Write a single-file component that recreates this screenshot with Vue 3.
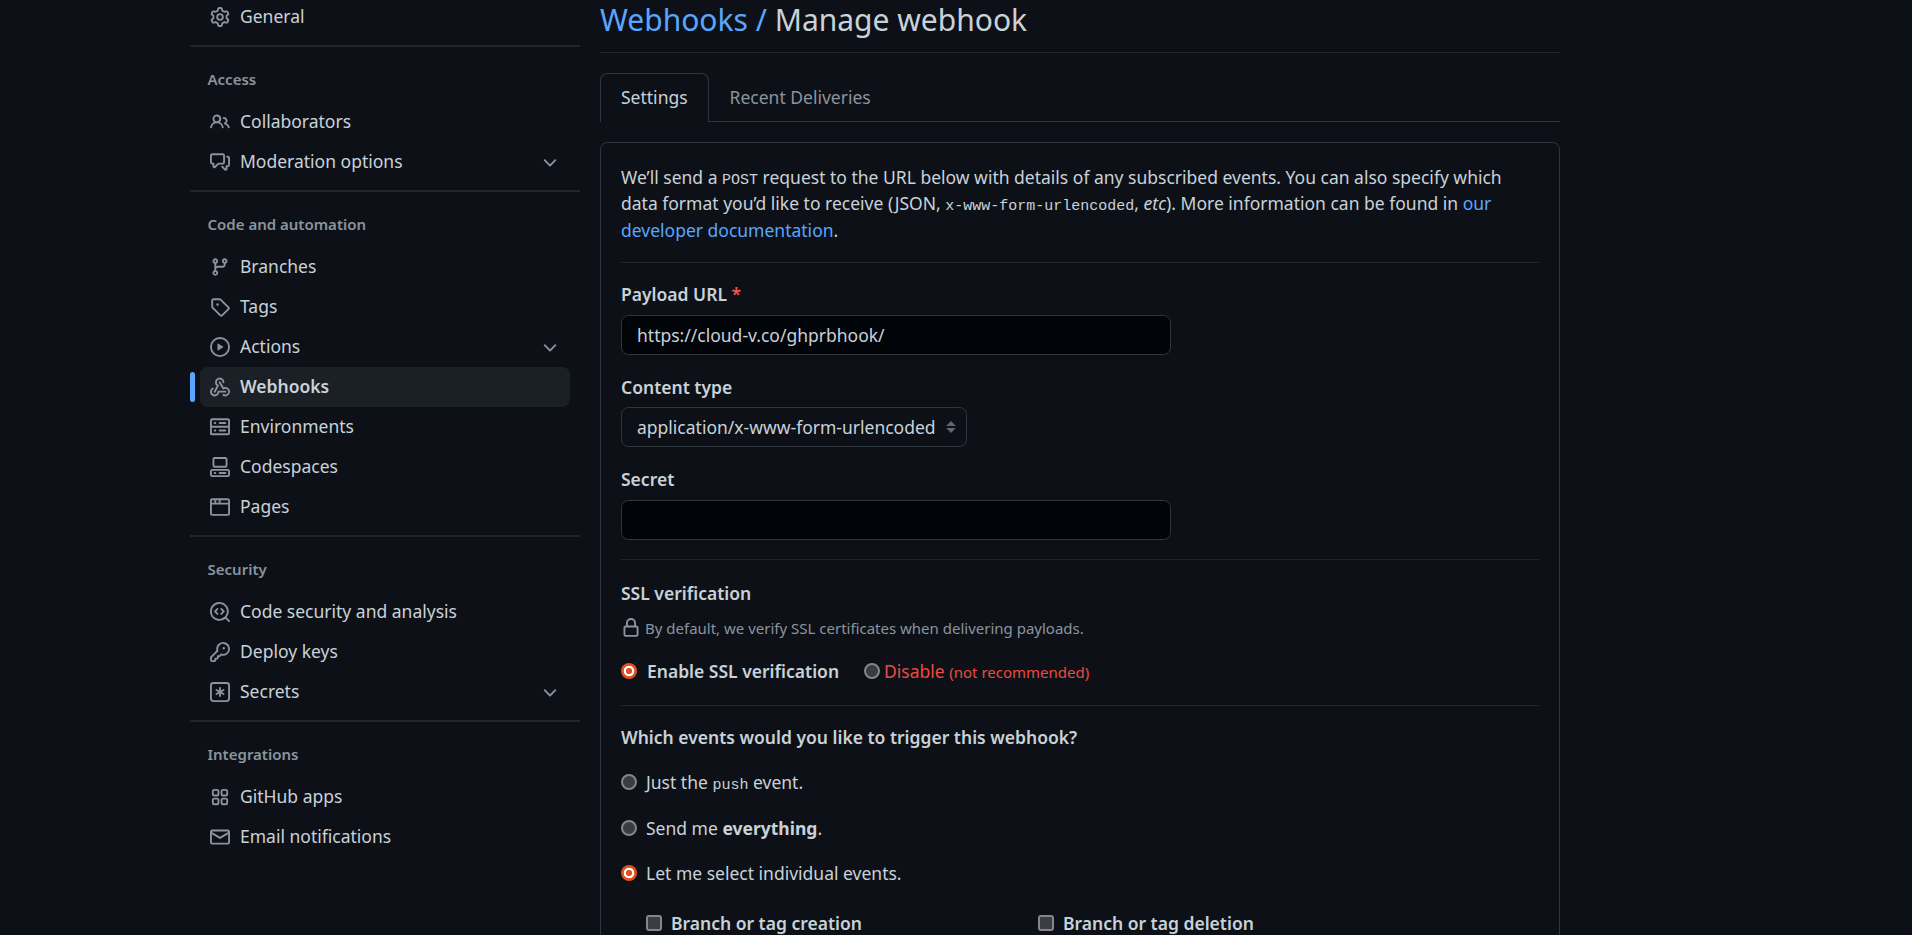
<script setup>
const icons = {
  gear: ['M8 0a8.2 8.2 0 0 1 .701.031C9.444.095 9.99.645 10.16 1.29l.288 1.107c.018.066.079.158.212.224.231.114.454.243.668.386.123.082.233.09.299.071l1.103-.303c.644-.176 1.392.021 1.82.63.27.385.506.792.704 1.218.315.675.111 1.422-.364 1.891l-.814.806c-.049.048-.098.147-.088.294.016.257.016.515 0 .772-.01.147.038.246.088.294l.814.806c.475.469.679 1.216.364 1.891a7.977 7.977 0 0 1-.704 1.217c-.428.61-1.176.807-1.82.63l-1.102-.302c-.067-.019-.177-.011-.3.071a5.909 5.909 0 0 1-.668.386c-.133.066-.194.158-.211.224l-.29 1.106c-.168.646-.715 1.196-1.458 1.26a8.006 8.006 0 0 1-1.402 0c-.743-.064-1.289-.614-1.458-1.26l-.289-1.106c-.018-.066-.079-.158-.212-.224a5.738 5.738 0 0 1-.668-.386c-.123-.082-.233-.09-.299-.071l-1.103.303c-.644.176-1.392-.021-1.82-.63a8.12 8.12 0 0 1-.704-1.218c-.315-.675-.111-1.422.363-1.891l.815-.806c.05-.048.098-.147.088-.294a6.214 6.214 0 0 1 0-.772c.01-.147-.038-.246-.088-.294l-.815-.806C.635 6.045.431 5.298.746 4.623a7.92 7.92 0 0 1 .704-1.217c.428-.61 1.176-.807 1.82-.63l1.102.302c.067.019.177.011.3-.071.214-.143.437-.272.668-.386.133-.066.194-.158.211-.224l.29-1.106C6.009.645 6.556.095 7.299.03 7.53.01 7.764 0 8 0Zm-.571 1.525c-.036.003-.108.036-.137.146l-.289 1.105c-.147.561-.549.967-.998 1.189-.173.086-.34.183-.5.29-.417.278-.97.423-1.529.27l-1.103-.303c-.109-.03-.175.016-.195.045-.22.312-.412.644-.573.99-.014.031-.021.11.059.19l.815.806c.411.406.562.957.53 1.456a4.709 4.709 0 0 0 0 .582c.032.499-.119 1.05-.53 1.456l-.815.806c-.081.08-.073.159-.059.19.162.346.353.677.573.989.02.03.085.076.195.046l1.102-.303c.56-.153 1.113-.008 1.53.27.161.107.328.204.501.29.447.222.85.629.997 1.189l.289 1.105c.029.109.101.143.137.146a6.6 6.6 0 0 0 1.142 0c.036-.003.108-.036.137-.146l.289-1.105c.147-.561.549-.967.998-1.189.173-.086.34-.183.5-.29.417-.278.97-.423 1.529-.27l1.103.303c.109.029.175-.016.195-.045.22-.313.411-.644.573-.99.014-.031.021-.11-.059-.19l-.815-.806c-.411-.406-.562-.957-.53-1.456a4.709 4.709 0 0 0 0-.582c-.032-.499.119-1.05.53-1.456l.815-.806c.081-.08.073-.159.059-.19a6.464 6.464 0 0 0-.573-.989c-.02-.03-.085-.076-.195-.046l-1.102.303c-.56.153-1.113.008-1.53-.27a4.44 4.44 0 0 0-.501-.29c-.447-.222-.85-.629-.997-1.189l-.289-1.105c-.029-.11-.101-.143-.137-.146a6.6 6.6 0 0 0-1.142 0ZM11 8a3 3 0 1 1-6 0 3 3 0 0 1 6 0ZM9.5 8a1.5 1.5 0 1 0-3.001.001A1.5 1.5 0 0 0 9.5 8Z'],
  people: ['M2 5.5a3.5 3.5 0 1 1 5.898 2.549 5.508 5.508 0 0 1 3.034 4.084.75.75 0 1 1-1.482.235 4 4 0 0 0-7.9 0 .75.75 0 0 1-1.482-.236A5.507 5.507 0 0 1 3.102 8.05 3.493 3.493 0 0 1 2 5.5ZM11 4a3.001 3.001 0 0 1 2.22 5.018 5.01 5.01 0 0 1 2.56 3.012.749.749 0 0 1-.885.954.752.752 0 0 1-.549-.514 3.507 3.507 0 0 0-2.522-2.372.75.75 0 0 1-.574-.73v-.352a.75.75 0 0 1 .416-.672A1.5 1.5 0 0 0 11 5.5.75.75 0 0 1 11 4Zm-5.5-.5a2 2 0 1 0-.001 3.999A2 2 0 0 0 5.5 3.5Z'],
  discussion: ['M1.75 1h8.5c.966 0 1.75.784 1.75 1.75v5.5A1.75 1.75 0 0 1 10.25 10H7.061l-2.574 2.573A1.458 1.458 0 0 1 2 11.543V10h-.25A1.75 1.75 0 0 1 0 8.25v-5.5C0 1.784.784 1 1.75 1ZM1.5 2.75v5.5c0 .138.112.25.25.25h1a.75.75 0 0 1 .75.75v2.19l2.72-2.72a.749.749 0 0 1 .53-.22h3.5a.25.25 0 0 0 .25-.25v-5.5a.25.25 0 0 0-.25-.25h-8.5a.25.25 0 0 0-.25.25Zm13 2a.25.25 0 0 0-.25-.25h-.5a.75.75 0 0 1 0-1.5h.5c.966 0 1.75.784 1.75 1.75v5.5A1.75 1.75 0 0 1 14.25 12H14v1.543a1.458 1.458 0 0 1-2.487 1.03L9.22 12.28a.749.749 0 0 1 .326-1.275.749.749 0 0 1 .734.215l2.22 2.22v-2.19a.75.75 0 0 1 .75-.75h1a.25.25 0 0 0 .25-.25Z'],
  branch: ['M9.5 3.25a2.25 2.25 0 1 1 3 2.122V6A2.5 2.5 0 0 1 10 8.5H6a1 1 0 0 0-1 1v1.128a2.251 2.251 0 1 1-1.5 0V5.372a2.25 2.25 0 1 1 1.5 0v1.836A2.493 2.493 0 0 1 6 7h4a1 1 0 0 0 1-1v-.628A2.25 2.25 0 0 1 9.5 3.25Zm-6 0a.75.75 0 1 0 1.5 0 .75.75 0 0 0-1.5 0Zm8.25-.75a.75.75 0 1 0 0 1.5.75.75 0 0 0 0-1.5ZM4.25 12a.75.75 0 1 0 0 1.5.75.75 0 0 0 0-1.5Z'],
  tag: ['M1 7.775V2.75C1 1.784 1.784 1 2.75 1h5.025c.464 0 .91.184 1.238.513l6.25 6.25a1.75 1.75 0 0 1 0 2.474l-5.026 5.026a1.75 1.75 0 0 1-2.474 0l-6.25-6.25A1.752 1.752 0 0 1 1 7.775Zm1.5 0c0 .066.026.13.073.177l6.25 6.25a.25.25 0 0 0 .354 0l5.025-5.025a.25.25 0 0 0 0-.354l-6.25-6.25a.25.25 0 0 0-.177-.073H2.75a.25.25 0 0 0-.25.25ZM6 5a1 1 0 1 1 0 2 1 1 0 0 1 0-2Z'],
  play: ['M8 0a8 8 0 1 1 0 16A8 8 0 0 1 8 0ZM1.5 8a6.5 6.5 0 1 0 13 0 6.5 6.5 0 0 0-13 0Zm4.879-2.773 4.264 2.559a.25.25 0 0 1 0 .428l-4.264 2.559A.25.25 0 0 1 6 10.559V5.442a.25.25 0 0 1 .379-.215Z'],
  webhook: ['M5.5 4.25a2.25 2.25 0 0 1 4.5 0 .75.75 0 0 0 1.5 0 3.75 3.75 0 1 0-6.14 2.889l-2.272 4.258a.75.75 0 0 0 1.324.706L7 7.25a.75.75 0 0 0-.309-1.015A2.25 2.25 0 0 1 5.5 4.25Z', 'M7.364 3.607a.75.75 0 0 1 1.03.257l2.608 4.349a3.75 3.75 0 1 1-.628 6.785.75.75 0 0 1 .752-1.299 2.25 2.25 0 1 0-.033-3.88.75.75 0 0 1-1.03-.256L7.107 4.636a.75.75 0 0 1 .257-1.03Z', 'M2.9 8.776A.75.75 0 0 1 2.625 9.8 2.25 2.25 0 1 0 6 11.75a.75.75 0 0 1 .75-.751h5.5a.75.75 0 0 1 0 1.5H7.425a3.751 3.751 0 1 1-5.55-3.998.75.75 0 0 1 1.024.274Z'],
  server: ['M1.75 1h12.5c.966 0 1.75.784 1.75 1.75v4c0 .372-.116.717-.314 1 .198.283.314.628.314 1v4a1.75 1.75 0 0 1-1.75 1.75H1.75A1.75 1.75 0 0 1 0 13.75v-4c0-.372.116-.717.314-1a1.739 1.739 0 0 1-.314-1v-4C0 1.784.784 1 1.75 1ZM1.5 2.75v4c0 .138.112.25.25.25h12.5a.25.25 0 0 0 .25-.25v-4a.25.25 0 0 0-.25-.25H1.75a.25.25 0 0 0-.25.25Zm.25 5.75a.25.25 0 0 0-.25.25v4c0 .138.112.25.25.25h12.5a.25.25 0 0 0 .25-.25v-4a.25.25 0 0 0-.25-.25ZM7 4.75A.75.75 0 0 1 7.75 4h4.5a.75.75 0 0 1 0 1.5h-4.5A.75.75 0 0 1 7 4.75ZM7.75 10h4.5a.75.75 0 0 1 0 1.5h-4.5a.75.75 0 0 1 0-1.5ZM3 4.75A.75.75 0 0 1 3.75 4h.5a.75.75 0 0 1 0 1.5h-.5A.75.75 0 0 1 3 4.75ZM3.75 10h.5a.75.75 0 0 1 0 1.5h-.5a.75.75 0 0 1 0-1.5Z'],
  codespaces: ['M0 11.25c0-.966.784-1.75 1.75-1.75h12.5c.966 0 1.75.784 1.75 1.75v3A1.75 1.75 0 0 1 14.25 16H1.75A1.75 1.75 0 0 1 0 14.25Zm2-9.5C2 .784 2.784 0 3.75 0h8.5C13.216 0 14 .784 14 1.75v5a1.75 1.75 0 0 1-1.75 1.75h-8.5A1.75 1.75 0 0 1 2 6.75Zm1.75-.25a.25.25 0 0 0-.25.25v5c0 .138.112.25.25.25h8.5a.25.25 0 0 0 .25-.25v-5a.25.25 0 0 0-.25-.25Zm-2 9.5a.25.25 0 0 0-.25.25v3c0 .138.112.25.25.25h12.5a.25.25 0 0 0 .25-.25v-3a.25.25 0 0 0-.25-.25Z', 'M7 12.75a.75.75 0 0 1 .75-.75h4.5a.75.75 0 0 1 0 1.5h-4.5a.75.75 0 0 1-.75-.75Zm-4 0a.75.75 0 0 1 .75-.75h.5a.75.75 0 0 1 0 1.5h-.5a.75.75 0 0 1-.75-.75Z'],
  browser: ['M0 2.75C0 1.784.784 1 1.75 1h12.5c.966 0 1.75.784 1.75 1.75v10.5A1.75 1.75 0 0 1 14.25 15H1.75A1.75 1.75 0 0 1 0 13.25ZM14.5 6h-13v7.25c0 .138.112.25.25.25h12.5a.25.25 0 0 0 .25-.25Zm-6-3.5v2h6V2.75a.25.25 0 0 0-.25-.25ZM5 2.5v2h2v-2Zm-3.25 0a.25.25 0 0 0-.25.25V4.5h2v-2Z'],
  codescan: ['M8.47 4.97a.75.75 0 0 0 0 1.06L9.94 7.5 8.47 8.97a.75.75 0 1 0 1.06 1.06l2-2a.75.75 0 0 0 0-1.06l-2-2a.75.75 0 0 0-1.06 0ZM6.53 6.03a.75.75 0 0 0-1.06-1.06l-2 2a.75.75 0 0 0 0 1.06l2 2a.75.75 0 1 0 1.06-1.06L5.06 7.5l1.47-1.47Z', 'M12.246 13.307a7.501 7.501 0 1 1 1.06-1.06l2.474 2.473a.749.749 0 0 1-.326 1.275.749.749 0 0 1-.734-.215ZM1.5 7.5a6.002 6.002 0 0 0 3.608 5.504 6.002 6.002 0 0 0 6.486-1.117.748.748 0 0 1 .292-.293A6 6 0 1 0 1.5 7.5Z'],
  key: ['M10.5 0a5.499 5.499 0 1 1-1.288 10.848l-.932.932a.749.749 0 0 1-.53.22H7v.75a.749.749 0 0 1-.22.53l-.5.5a.749.749 0 0 1-.53.22H5v.75a.749.749 0 0 1-.22.53l-.5.5a.749.749 0 0 1-.53.22h-2A1.75 1.75 0 0 1 0 14.25v-2c0-.199.079-.389.22-.53l4.932-4.932A5.5 5.5 0 0 1 10.5 0Zm-4 5.5c-.001.431.069.86.205 1.269a.75.75 0 0 1-.181.768L1.5 12.56v1.69c0 .138.112.25.25.25h1.69l.06-.06v-1.19a.75.75 0 0 1 .75-.75h1.19l.06-.06v-1.19a.75.75 0 0 1 .75-.75h1.19l1.023-1.025a.75.75 0 0 1 .768-.18A4 4 0 1 0 6.5 5.5ZM11 6a1 1 0 1 1 0-2 1 1 0 0 1 0 2Z'],
  asterisk: ['M0 2.75A2.75 2.75 0 0 1 2.75 0h10.5A2.75 2.75 0 0 1 16 2.75v10.5A2.75 2.75 0 0 1 13.25 16H2.75A2.75 2.75 0 0 1 0 13.25ZM2.75 1.5c-.69 0-1.25.56-1.25 1.25v10.5c0 .69.56 1.25 1.25 1.25h10.5c.69 0 1.25-.56 1.25-1.25V2.75c0-.69-.56-1.25-1.25-1.25Z', 'M8 4a.75.75 0 0 1 .75.75V6.7l1.69-.975a.75.75 0 0 1 .75 1.3L9.5 8l1.69.976a.75.75 0 0 1-.75 1.298L8.75 9.3v1.951a.75.75 0 0 1-1.5 0V9.299l-1.69.976a.75.75 0 0 1-.75-1.3L6.5 8l-1.69-.975a.75.75 0 0 1 .75-1.3l1.69.976V4.75A.75.75 0 0 1 8 4Z'],
  apps: ['M1.5 3.25c0-.966.784-1.75 1.75-1.75h2.5c.966 0 1.75.784 1.75 1.75v2.5A1.75 1.75 0 0 1 5.75 7.5h-2.5A1.75 1.75 0 0 1 1.5 5.75Zm7 0c0-.966.784-1.75 1.75-1.75h2.5c.966 0 1.75.784 1.75 1.75v2.5a1.75 1.75 0 0 1-1.75 1.75h-2.5A1.75 1.75 0 0 1 8.5 5.75Zm-7 7c0-.966.784-1.75 1.75-1.75h2.5c.966 0 1.75.784 1.75 1.75v2.5a1.75 1.75 0 0 1-1.75 1.75h-2.5a1.75 1.75 0 0 1-1.75-1.75Zm7 0c0-.966.784-1.75 1.75-1.75h2.5c.966 0 1.75.784 1.75 1.75v2.5a1.75 1.75 0 0 1-1.75 1.75h-2.5a1.75 1.75 0 0 1-1.75-1.75ZM3.25 3a.25.25 0 0 0-.25.25v2.5c0 .138.112.25.25.25h2.5A.25.25 0 0 0 6 5.75v-2.5A.25.25 0 0 0 5.75 3Zm7 0a.25.25 0 0 0-.25.25v2.5c0 .138.112.25.25.25h2.5a.25.25 0 0 0 .25-.25v-2.5a.25.25 0 0 0-.25-.25Zm-7 7a.25.25 0 0 0-.25.25v2.5c0 .138.112.25.25.25h2.5a.25.25 0 0 0 .25-.25v-2.5a.25.25 0 0 0-.25-.25Zm7 0a.25.25 0 0 0-.25.25v2.5c0 .138.112.25.25.25h2.5a.25.25 0 0 0 .25-.25v-2.5a.25.25 0 0 0-.25-.25Z'],
  mail: ['M1.75 2h12.5c.966 0 1.75.784 1.75 1.75v8.5A1.75 1.75 0 0 1 14.25 14H1.75A1.75 1.75 0 0 1 0 12.25v-8.5C0 2.784.784 2 1.75 2ZM1.5 12.251c0 .138.112.25.25.25h12.5a.25.25 0 0 0 .25-.25V5.809L8.38 9.397a.75.75 0 0 1-.76 0L1.5 5.809v6.442Zm13-8.181v-.32a.25.25 0 0 0-.25-.25H1.75a.25.25 0 0 0-.25.25v.32L8 7.88Z'],
  chevron: ['M12.78 5.22a.749.749 0 0 1 0 1.06l-4.25 4.25a.749.749 0 0 1-1.06 0L3.22 6.28a.749.749 0 1 1 1.06-1.06L8 8.939l3.72-3.719a.749.749 0 0 1 1.06 0Z'],
  lock: ['M4 4a4 4 0 0 1 8 0v2h.25c.966 0 1.75.784 1.75 1.75v5.5A1.75 1.75 0 0 1 12.25 15h-8.5A1.75 1.75 0 0 1 2 13.25v-5.5C2 6.784 2.784 6 3.75 6H4Zm8.25 3.5h-8.5a.25.25 0 0 0-.25.25v5.5c0 .138.112.25.25.25h8.5a.25.25 0 0 0 .25-.25v-5.5a.25.25 0 0 0-.25-.25ZM10.5 6V4a2.5 2.5 0 1 0-5 0v2Z']
}

const groups = [
  { items: [{ label: 'General', icon: 'gear' }] },
  { title: 'Access', items: [
    { label: 'Collaborators', icon: 'people' },
    { label: 'Moderation options', icon: 'discussion', more: true }
  ] },
  { title: 'Code and automation', items: [
    { label: 'Branches', icon: 'branch' },
    { label: 'Tags', icon: 'tag' },
    { label: 'Actions', icon: 'play', more: true },
    { label: 'Webhooks', icon: 'webhook', active: true },
    { label: 'Environments', icon: 'server' },
    { label: 'Codespaces', icon: 'codespaces' },
    { label: 'Pages', icon: 'browser' }
  ] },
  { title: 'Security', items: [
    { label: 'Code security and analysis', icon: 'codescan' },
    { label: 'Deploy keys', icon: 'key' },
    { label: 'Secrets', icon: 'asterisk', more: true }
  ] },
  { title: 'Integrations', items: [
    { label: 'GitHub apps', icon: 'apps' },
    { label: 'Email notifications', icon: 'mail' }
  ] }
]
</script>

<template>
  <div class="page">
    <aside class="sidebar">
      <section v-for="(group, g) in groups" :key="g" class="group">
        <h3 v-if="group.title" class="group-title">{{ group.title }}</h3>
        <a
          v-for="item in group.items"
          :key="item.label"
          class="nav-item"
          :class="{ active: item.active }"
        >
          <svg class="icon" viewBox="0 0 16 16"><path v-for="d in icons[item.icon]" :key="d" :d="d" /></svg>
          <span class="nav-label">{{ item.label }}</span>
          <svg v-if="item.more" class="icon chevron" viewBox="0 0 16 16"><path :d="icons.chevron[0]" /></svg>
        </a>
      </section>
    </aside>

    <main class="main">
      <h2 class="title"><a class="link">Webhooks /</a> Manage webhook</h2>

      <div class="tabs">
        <a class="tab selected">Settings</a>
        <a class="tab">Recent Deliveries</a>
      </div>

      <div class="box">
        <p class="intro">
          We’ll send a <code>POST</code> request to the URL below with details of any subscribed events. You can also specify which data format you’d like to receive (JSON, <code>x-www-form-urlencoded</code>, <em>etc</em>). More information can be found in <a class="link">our developer documentation</a>.
        </p>

        <hr class="rule rule-intro" />

        <div class="field">
          <label class="label">Payload URL <span class="req">*</span></label>
          <input class="input" type="text" value="https://cloud-v.co/ghprbhook/" />
        </div>
        <div class="field">
          <label class="label">Content type</label>
          <div class="select">
            <span>application/x-www-form-urlencoded</span>
            <svg class="updown" viewBox="0 0 10 12"><path d="M5 0 9.8 5H.2Z" /><path d="M5 12 .2 7h9.6Z" /></svg>
          </div>
        </div>
        <div class="field">
          <label class="label">Secret</label>
          <input class="input secret" type="text" />
        </div>

        <hr class="rule rule-form" />

        <h4 class="label ssl-title">SSL verification</h4>
        <p class="hint">
          <svg class="icon lock" viewBox="0 0 16 16"><path :d="icons.lock[0]" /></svg>
          By default, we verify SSL certificates when delivering payloads.
        </p>
        <div class="ssl-options">
          <label class="choice strong"><span class="radio on"></span>Enable SSL verification</label>
          <label class="choice danger"><span class="radio"></span><span>Disable <small>(not recommended)</small></span></label>
        </div>

        <hr class="rule rule-ssl" />

        <h4 class="label events-title">Which events would you like to trigger this webhook?</h4>
        <label class="choice event"><span class="radio"></span><span class="choice-text">Just the <code>push</code> event.</span></label>
        <label class="choice event"><span class="radio"></span><span class="choice-text">Send me <strong>everything</strong>.</span></label>
        <label class="choice event"><span class="radio on"></span><span class="choice-text">Let me select individual events.</span></label>

        <div class="checks">
          <label class="check"><span class="checkbox"></span>Branch or tag creation</label>
          <label class="check"><span class="checkbox"></span>Branch or tag deletion</label>
        </div>
      </div>
    </main>
  </div>
</template>

<style>
html, body { margin: 0; background: #0d1117; overflow: hidden; }
</style>

<style scoped>
.page {
  display: flex;
  gap: 20px;
  height: 935px;
  overflow: hidden;
  padding-left: 190px;
  width: 1370px;
  color: #c9d1d9;
  background: #0d1117;
  font-family: "Noto Sans", sans-serif;
  font-size: 17.5px;
  line-height: 26.25px;
}

.sidebar { width: 390px; flex: none; margin-top: -3px; }
.group { padding-bottom: 8px; border-bottom: 2px solid #21262d; }
.group:last-child { border-bottom: 0; }
.group-title {
  margin: 0;
  padding: 0 0 0 17.5px;
  height: 55px;
  line-height: 65px;
  box-sizing: border-box;
  font-size: 15px;
  font-weight: 600;
  color: #8b949e;
}
.nav-item {
  position: relative;
  display: flex;
  align-items: center;
  height: 40px;
  margin: 0 10px;
  padding: 0 10px;
  border-radius: 7.5px;
  box-sizing: border-box;
}
.nav-item.active { background: #1b2026; font-weight: 600; }
.nav-item.active::before {
  content: "";
  position: absolute;
  left: -10px;
  top: 5px;
  width: 5px;
  height: 30px;
  border-radius: 5px;
  background: #58a6ff;
}
.nav-label { flex: 1; margin-left: 10px; padding-bottom: 1px; }
.icon { width: 20px; height: 20px; flex: none; fill: #8b949e; }
.chevron { fill: #8b949e; margin-top: 2px; }

.main { width: 960px; flex: none; }
.title {
  margin: 0;
  height: 52px;
  border-bottom: 1px solid #21262d;
  font-size: 30px;
  font-weight: 400;
  line-height: 40px;
}
.link { color: #58a6ff; }

.tabs {
  display: flex;
  height: 48px;
  margin-top: 20px;
  border-bottom: 1px solid #30363d;
}
.tab {
  box-sizing: border-box;
  margin-left: 1px;
  padding: 0 20px;
  line-height: 49px;
  color: #8b949e;
}
.tab.selected {
  height: 49px;
  margin-left: 0;
  line-height: 47px;
  color: #c9d1d9;
  background: #0d1117;
  border: 1px solid #30363d;
  border-bottom: 0;
  border-radius: 7.5px 7.5px 0 0;
}

.box {
  margin-top: 20px;
  padding: 21px 20px 20px;
  border: 1px solid #30363d;
  border-radius: 7.5px;
  height: 900px;
  box-sizing: border-box;
}
.intro { margin: 0; }
code {
  font-family: "Liberation Mono", monospace;
  font-size: 15px;
  line-height: 1;
}
.rule { border: 0; border-top: 1px solid #21262d; margin: 0; }
.rule-intro { margin-top: 19px; }
.label { display: block; margin: 0; font-weight: 600; font-size: 17.5px; }
.req { color: #f85149; }
.rule-intro + .field { margin-top: 18px; }
.field + .field { margin-top: 19px; }
.field .label { margin-bottom: 7.5px; }
.input {
  display: block;
  width: 550px;
  height: 40px;
  box-sizing: border-box;
  padding: 0 15px;
  color: #c9d1d9;
  background: #010409;
  border: 1px solid #30363d;
  border-radius: 7.5px;
  font: inherit;
  outline: none;
}
.select {
  display: flex;
  align-items: center;
  justify-content: space-between;
  width: 346px;
  height: 40px;
  box-sizing: border-box;
  padding: 0 10px 0 15px;
  border: 1px solid #30363d;
  border-radius: 7.5px;
}
.updown { width: 10px; height: 12px; fill: #5f6670; }
.rule-form { margin-top: 18.5px; }
.ssl-title { margin-top: 20.25px; }
.hint {
  display: flex;
  align-items: center;
  gap: 4px;
  margin: 9px 0 0;
  font-size: 15px;
  color: #8b949e;
}
.lock { width: 20px; height: 20px; }
.ssl-options { display: flex; height: 26.25px; margin-top: 17px; }
.choice { display: flex; align-items: center; }
.strong { font-weight: 600; }
.strong .radio { margin-right: 10px; }
.danger { margin-left: 25px; color: #ec4a3f; }
.danger .radio { margin-right: 4px; }
.danger small { font-size: 15px; line-height: 1; }
.radio {
  width: 16px;
  height: 16px;
  flex: none;
  box-sizing: border-box;
  border-radius: 50%;
  background: #3b3b44;
  border: 2px solid #85858c;
}
.radio.on {
  border: 0;
  background: radial-gradient(circle at center, #e2501f 0 2.8px, #fff 3.4px 5px, #e2501f 5.6px);
}
.rule-ssl { margin-top: 20px; }
.events-title { margin-top: 18px; }
.event { height: 26.25px; margin-top: 19.25px; }
.choice-text { margin-left: 9px; }
.checks { display: grid; grid-template-columns: 392px 392px; margin: 23.75px 0 0 25px; }
.check { display: flex; align-items: center; font-weight: 600; }
.checkbox {
  width: 16px;
  height: 16px;
  margin-right: 9px;
  box-sizing: border-box;
  border: 2px solid #85858c;
  border-radius: 3px;
  background: #3b3b44;
}
</style>
